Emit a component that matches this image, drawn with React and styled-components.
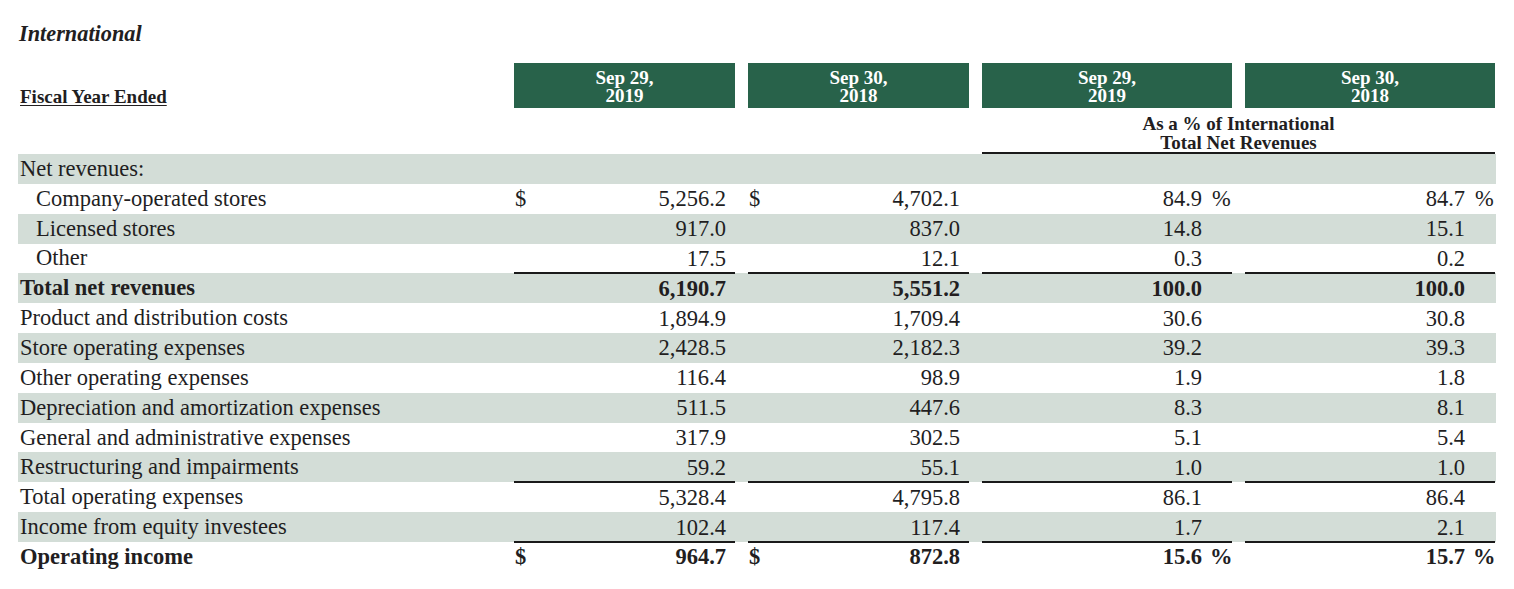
import React from "react";
import styled, { createGlobalStyle } from "styled-components";

const Global = createGlobalStyle`
  html, body { margin: 0; padding: 0; background: #ffffff; }
  body { font-family: "Liberation Serif", "Times New Roman", serif; color: #221e1f; }
`;

const Page = styled.div`
  padding: 21px 18px 0 18px;
  width: 1478px;
`;

const Title = styled.div`
  font-size: 22.3px;
  line-height: 26px;
  font-weight: bold;
  font-style: italic;
  padding-left: 1px;
`;

const COLS = "483px 221px 221px 250px 250px";

const HeadRow = styled.div`
  display: grid;
  grid-template-columns: ${COLS};
  column-gap: 13px;
  margin-top: 16px;
  height: 45px;
`;

const FiscalLabel = styled.div`
  align-self: end;
  font-size: 19px;
  line-height: 19px;
  font-weight: bold;
  text-decoration: underline;
  text-underline-offset: 2px;
  padding: 0 0 2px 2px;
`;

const DateBox = styled.div`
  background: #28624a;
  color: #ffffff;
  font-size: 19px;
  line-height: 18px;
  font-weight: bold;
  display: flex;
  flex-direction: column;
  align-items: center;
  justify-content: center;
  padding-top: 2px;
`;

const PctHeadRow = styled.div`
  display: grid;
  grid-template-columns: ${COLS};
  column-gap: 13px;
  margin-top: 6px;
`;

const PctHead = styled.div`
  grid-column: 4 / span 2;
  text-align: center;
  font-size: 19px;
  line-height: 19px;
  font-weight: bold;
  height: 38px;
  border-bottom: 2px solid #1a1a1a;
`;

const Row = styled.div`
  display: grid;
  grid-template-columns: ${COLS};
  column-gap: 13px;
  height: 29.85px;
  background: ${(p) => (p.$shade ? "#d3ddd7" : "transparent")};
  font-size: 22.5px;
  font-weight: ${(p) => (p.$bold ? "bold" : "normal")};
`;

const Label = styled.div`
  display: flex;
  align-items: center;
  padding-left: ${(p) => (p.$indent ? "18px" : "2px")};
  white-space: nowrap;
`;

const Cell = styled.div`
  box-sizing: border-box;
  display: flex;
  align-items: center;
  border-top: 2px solid ${(p) => (p.$rule ? "#1a1a1a" : "transparent")};
  margin-top: -1px;
  padding-right: ${(p) => (p.$pct ? "0" : "9px")};
  white-space: nowrap;
`;

const Dollar = styled.span`
  width: 12px;
  padding-left: 1px;
`;

const Value = styled.span`
  margin-left: auto;
`;

const Pct = styled.span`
  width: 30px;
  box-sizing: border-box;
  padding-left: ${(p) => (p.$bold ? "8px" : "10px")};
`;

const rows = [
  { label: "Net revenues:", vals: null },
  { label: "Company-operated stores", indent: true, dollar: true, pct: true, vals: ["5,256.2", "4,702.1", "84.9", "84.7"] },
  { label: "Licensed stores", indent: true, vals: ["917.0", "837.0", "14.8", "15.1"] },
  { label: "Other", indent: true, vals: ["17.5", "12.1", "0.3", "0.2"] },
  { label: "Total net revenues", bold: true, rule: true, vals: ["6,190.7", "5,551.2", "100.0", "100.0"] },
  { label: "Product and distribution costs", vals: ["1,894.9", "1,709.4", "30.6", "30.8"] },
  { label: "Store operating expenses", vals: ["2,428.5", "2,182.3", "39.2", "39.3"] },
  { label: "Other operating expenses", vals: ["116.4", "98.9", "1.9", "1.8"] },
  { label: "Depreciation and amortization expenses", vals: ["511.5", "447.6", "8.3", "8.1"] },
  { label: "General and administrative expenses", vals: ["317.9", "302.5", "5.1", "5.4"] },
  { label: "Restructuring and impairments", vals: ["59.2", "55.1", "1.0", "1.0"] },
  { label: "Total operating expenses", rule: true, vals: ["5,328.4", "4,795.8", "86.1", "86.4"] },
  { label: "Income from equity investees", vals: ["102.4", "117.4", "1.7", "2.1"] },
  { label: "Operating income", bold: true, rule: true, dollar: true, pct: true, vals: ["964.7", "872.8", "15.6", "15.7"] },
];

const dates = [
  ["Sep 29,", "2019"],
  ["Sep 30,", "2018"],
  ["Sep 29,", "2019"],
  ["Sep 30,", "2018"],
];

export default function App() {
  return (
    <Page>
      <Global />
      <Title>International</Title>
      <HeadRow>
        <FiscalLabel>Fiscal Year Ended</FiscalLabel>
        {dates.map((d, i) => (
          <DateBox key={i}>
            <span>{d[0]}</span>
            <span>{d[1]}</span>
          </DateBox>
        ))}
      </HeadRow>
      <PctHeadRow>
        <PctHead>
          As a % of International
          <br />
          Total Net Revenues
        </PctHead>
      </PctHeadRow>
      {rows.map((r, i) => (
        <Row key={r.label} $shade={i % 2 === 0} $bold={r.bold}>
          <Label $indent={r.indent}>{r.label}</Label>
          {r.vals &&
            r.vals.map((v, j) => (
              <Cell key={j} $rule={r.rule} $pct={j >= 2}>
                {j < 2 && r.dollar && <Dollar>$</Dollar>}
                <Value>{v}</Value>
                {j >= 2 && <Pct $bold={r.bold}>{r.pct ? "%" : ""}</Pct>}
              </Cell>
            ))}
        </Row>
      ))}
    </Page>
  );
}
